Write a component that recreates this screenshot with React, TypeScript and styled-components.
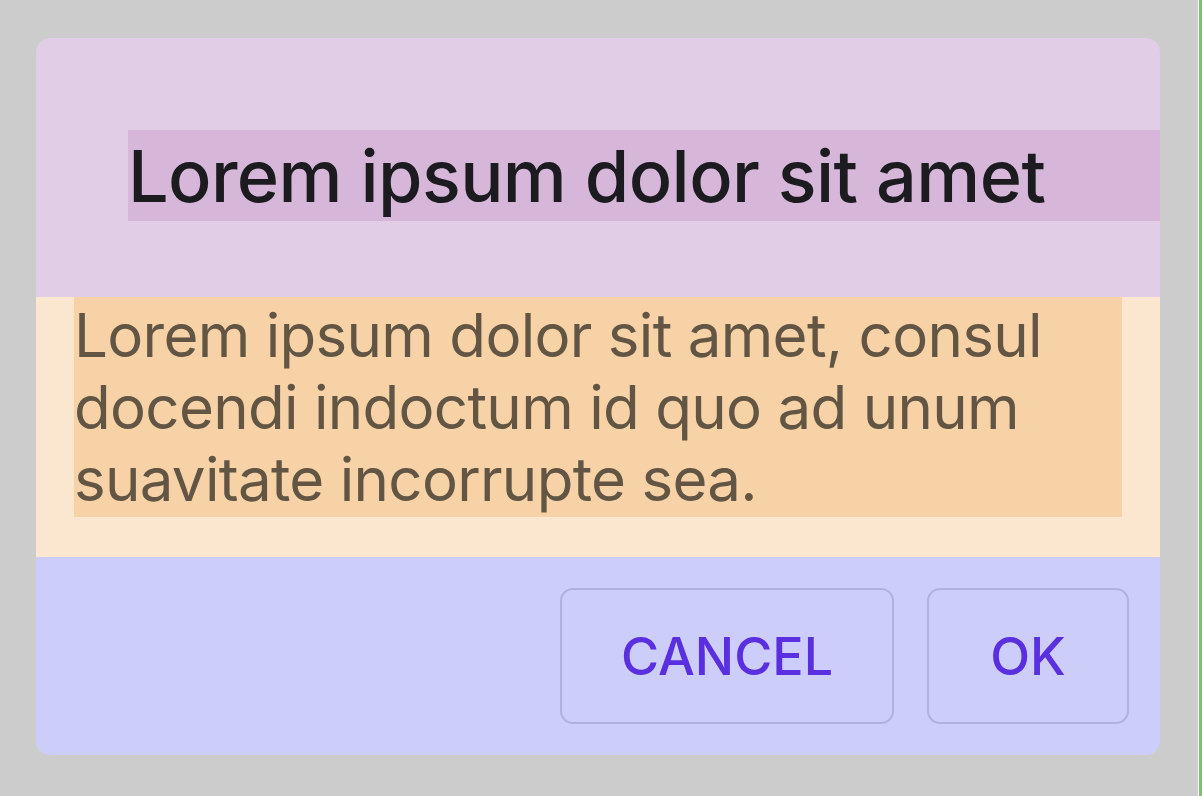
import React from "react";
import styled, { createGlobalStyle } from "styled-components";

const GlobalStyle = createGlobalStyle`
  html, body {
    margin: 0;
    padding: 0;
    width: 100%;
    height: 100%;
    background: #cccccc;
    font-family: Inter, "Noto Sans", "Liberation Sans", sans-serif;
  }
  #root {
    height: 100%;
  }
  * { box-sizing: border-box; }
`;

const Page = styled.div`
  display: flex;
  width: 1202px;
  height: 796px;
  background: #cccccc;
`;

const Stage = styled.div`
  flex: 1;
  padding: 38px 38px 0 36px;
`;

const EdgeStrip = styled.div`
  flex: 0 0 4px;
  border-left: 1px solid #ffffff;
  background: #77c46b;
`;

const Dialog = styled.div`
  width: 1124px;
  display: flex;
  flex-direction: column;
  border-radius: 14px;
  overflow: hidden;
`;

const Header = styled.div`
  background: #e1cde5;
  padding: 92px 0 76px 92px;
`;

const Title = styled.h1`
  margin: 0;
  background: #d6b7d9;
  color: #1c1b1f;
  font-size: 72px;
  font-weight: 450;
  letter-spacing: -0.6px;
  line-height: 91px;
  height: 91px;
  white-space: nowrap;
`;

const Body = styled.div`
  background: #fbe6cf;
  padding: 0 38px 40px 38px;
`;

const Message = styled.p`
  margin: 0;
  background: #f8d2a7;
  color: #625544;
  font-size: 60px;
  font-weight: 400;
  letter-spacing: -0.7px;
  line-height: 72px;
  padding: 2px 0;
`;

const Footer = styled.div`
  background: #cdcdfa;
  padding: 31px 31px 31px 0;
  display: flex;
  justify-content: flex-end;
  gap: 33px;
`;

const ActionButton = styled.button<{ $width: number }>`
  width: ${(p) => p.$width}px;
  height: 136px;
  background: transparent;
  border: 2px solid #b1b1db;
  border-radius: 13px;
  color: #5a2fe0;
  font-family: Inter, "Noto Sans", "Liberation Sans", sans-serif;
  font-size: 52px;
  font-weight: 500;
  display: flex;
  align-items: center;
  justify-content: center;
  padding: 0;
  cursor: pointer;
`;

export default function App() {
  return (
    <>
      <GlobalStyle />
      <Page>
        <Stage>
          <Dialog>
            <Header>
              <Title>Lorem ipsum dolor sit amet</Title>
            </Header>
            <Body>
              <Message>
                Lorem ipsum dolor sit amet, consul docendi indoctum id quo ad unum suavitate incorrupte sea.
              </Message>
            </Body>
            <Footer>
              <ActionButton $width={334}>CANCEL</ActionButton>
              <ActionButton $width={202}>OK</ActionButton>
            </Footer>
          </Dialog>
        </Stage>
        <EdgeStrip />
      </Page>
    </>
  );
}
